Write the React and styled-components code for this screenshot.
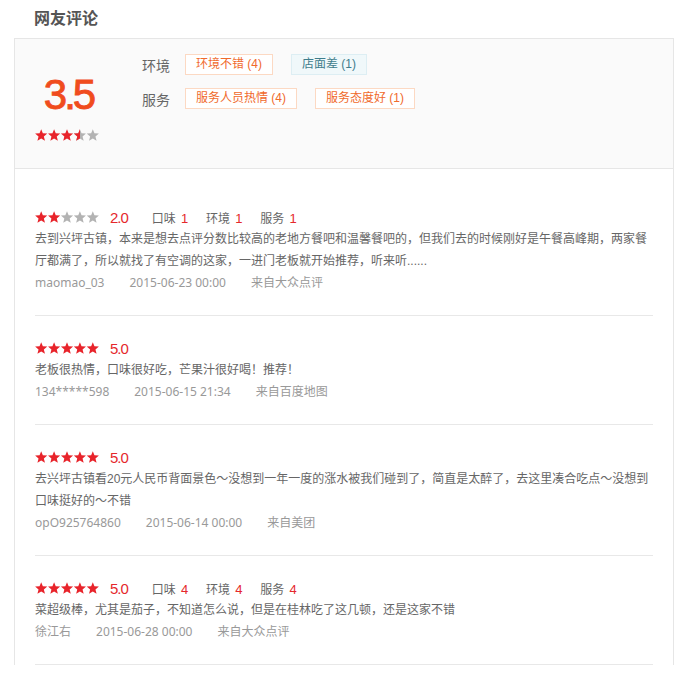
import React from 'react';
import styled, { createGlobalStyle } from 'styled-components';

const GlobalStyle = createGlobalStyle`
  body {
    margin: 0;
    background: #fff;
    font-family: "Liberation Sans", "Noto Sans CJK SC", sans-serif;
  }
`

const Page = styled.div`
  padding: 0 14px;
`
const Title = styled.h2`
  margin: 0;
  padding-left: 20px;
  height: 38px;
  line-height: 38px;
  font-size: 16px;
  font-weight: bold;
  color: #555;
`
const Card = styled.div`
  border: 1px solid #e6e6e6;
  border-bottom: none;
`
const Summary = styled.div`
  display: flex;
  height: 130px;
  box-sizing: border-box;
  padding: 15px 20px 0;
  background: #fafafa;
  border-bottom: 1px solid #e6e6e6;
`
const ScoreBox = styled.div`
  width: 64px;
  padding-top: 17px;
  display: flex;
  flex-direction: column;
  align-items: center;
`
const BigScore = styled.div`
  font-size: 42px;
  line-height: 48px;
  color: #f04c1d;
  -webkit-text-stroke: 0.9px #f04c1d;
  letter-spacing: -3px;
  padding-left: 3px;
  margin-bottom: 10px;
`
const Tags = styled.div`
  margin-left: 43px;
`
const TagRow = styled.div`
  display: flex;
  align-items: center;
  height: 21px;
  margin-bottom: 13px;
`
const Label = styled.span`
  width: 28px;
  margin-right: 15px;
  font-size: 14px;
  color: #666;
  white-space: nowrap;
`
const Tag = styled.span`
  box-sizing: border-box;
  height: 21px;
  padding: 0 10px;
  margin-right: 18px;
  font-size: 12px;
  line-height: 19px;
  white-space: nowrap;
  border: 1px solid ${p => (p.$tone === 'bad' ? '#ddeef3' : '#fcd9c3')};
  background: ${p => (p.$tone === 'bad' ? '#f0f8fa' : '#fff')};
  color: ${p => (p.$tone === 'bad' ? '#3f7d8c' : '#f06a2c')};
`
const ReviewList = styled.div`
  padding: 16px 20px 0;
`
const Review = styled.div`
  padding: 21px 0;
  border-bottom: 1px solid #e8e8e8;
`
const ReviewHead = styled.div`
  display: flex;
  align-items: center;
  height: 22px;
`
const ReviewScore = styled.span`
  margin: 0 24px 0 11px;
  font-size: 15px;
  letter-spacing: -1px;
  color: #e5282c;
`
const SubItem = styled.span`
  margin-right: 18px;
  font-size: 12px;
  color: #666;
`
const SubNum = styled.span`
  margin-left: 5px;
  font-size: 13px;
  color: #e5282c;
`
const ReviewText = styled.p`
  margin: 0;
  font-size: 12px;
  line-height: 22px;
  color: #666;
`
const Meta = styled.div`
  display: flex;
  gap: 25px;
  font-family: "Noto Sans", "Noto Sans CJK SC", sans-serif;
  font-size: 12px;
  line-height: 22px;
  color: #999;
`

const starPoints = (cx, cy, R, r) =>
  Array.from({ length: 10 }, (_, i) => {
    const a = (Math.PI / 180) * (-90 + i * 36);
    const rad = i % 2 ? r : R;
    return `${(cx + rad * Math.cos(a)).toFixed(2)},${(cy + rad * Math.sin(a)).toFixed(2)}`;
  }).join(' ');

let clipSeq = 0;

function Stars({ value }) {
  const id = React.useMemo(() => `half-${clipSeq++}`, []);
  return (
    <svg width="64" height="12" viewBox="0 0 64 12">
      <defs>
        <clipPath id={id}>
          <rect x="0" y="0" width={Math.floor(value) * 12.9 + 6.2} height="12" />
        </clipPath>
      </defs>
      {[0, 1, 2, 3, 4].map(i => {
        const pts = starPoints(6.2 + i * 12.9, 6.6, 6.4, 2.8);
        const full = i < Math.floor(value);
        const half = !full && i < value;
        return (
          <g key={i}>
            <polygon points={pts} fill={full ? '#e8242b' : '#b3b3b3'} />
            {half && <polygon points={pts} fill="#e8242b" clipPath={`url(#${id})`} />}
          </g>
        );
      })}
    </svg>
  );
}

const reviews = [
  {
    stars: 2,
    score: '2.0',
    subs: [['口味', 1], ['环境', 1], ['服务', 1]],
    text: '去到兴坪古镇，本来是想去点评分数比较高的老地方餐吧和温馨餐吧的，但我们去的时候刚好是午餐高峰期，两家餐厅都满了，所以就找了有空调的这家，一进门老板就开始推荐，听来听......',
    user: 'maomao_03',
    time: '2015-06-23 00:00',
    from: '来自大众点评',
  },
  {
    stars: 5,
    score: '5.0',
    subs: [],
    text: '老板很热情，口味很好吃，芒果汁很好喝！推荐！',
    user: '134*****598',
    time: '2015-06-15 21:34',
    from: '来自百度地图',
  },
  {
    stars: 5,
    score: '5.0',
    subs: [],
    text: '去兴坪古镇看20元人民币背面景色～没想到一年一度的涨水被我们碰到了，简直是太醉了，去这里凑合吃点～没想到口味挺好的～不错',
    user: 'opO925764860',
    time: '2015-06-14 00:00',
    from: '来自美团',
  },
  {
    stars: 5,
    score: '5.0',
    subs: [['口味', 4], ['环境', 4], ['服务', 4]],
    text: '菜超级棒，尤其是茄子，不知道怎么说，但是在桂林吃了这几顿，还是这家不错',
    user: '徐江右',
    time: '2015-06-28 00:00',
    from: '来自大众点评',
  },
];

const tagRows = [
  { label: '环境', tags: [['环境不错 (4)', 'good'], ['店面差 (1)', 'bad']] },
  { label: '服务', tags: [['服务人员热情 (4)', 'good'], ['服务态度好 (1)', 'good']] },
];

export default function App() {
  return (
    <Page>
      <GlobalStyle />
      <Title>网友评论</Title>
      <Card>
        <Summary>
          <ScoreBox>
            <BigScore>3.5</BigScore>
            <Stars value={3.5} />
          </ScoreBox>
          <Tags>
            {tagRows.map(row => (
              <TagRow key={row.label}>
                <Label>{row.label}</Label>
                {row.tags.map(([text, tone]) => (
                  <Tag key={text} $tone={tone}>{text}</Tag>
                ))}
              </TagRow>
            ))}
          </Tags>
        </Summary>
        <ReviewList>
          {reviews.map((r, i) => (
            <Review key={i}>
              <ReviewHead>
                <Stars value={r.stars} />
                <ReviewScore>{r.score}</ReviewScore>
                {r.subs.map(([name, n]) => (
                  <SubItem key={name}>
                    {name}
                    <SubNum>{n}</SubNum>
                  </SubItem>
                ))}
              </ReviewHead>
              <ReviewText>{r.text}</ReviewText>
              <Meta>
                <span>{r.user}</span>
                <span>{r.time}</span>
                <span>{r.from}</span>
              </Meta>
            </Review>
          ))}
        </ReviewList>
      </Card>
    </Page>
  );
}
